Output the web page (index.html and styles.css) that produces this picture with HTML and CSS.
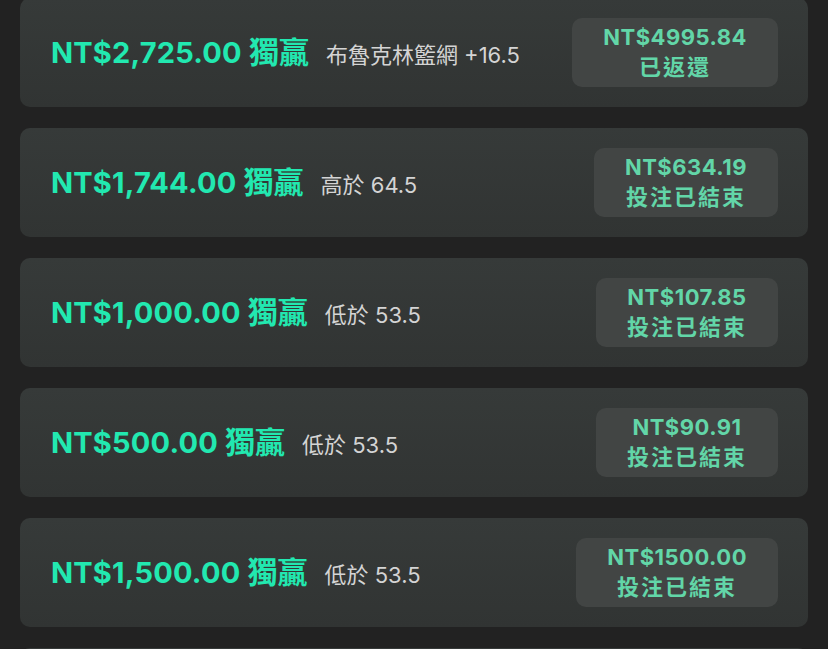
FILE: index.html
```html
<!DOCTYPE html>
<html>
<head>
  <title>投注紀錄</title>
  <link rel="stylesheet" href="styles.css">
</head>
<body>
  <div class="bet-list">
    <div class="bet-card">
      <div class="bet-info">
        <span class="bet-amount">NT$2,725.00 <span class="bet-type">獨贏</span></span>
        <span class="bet-pick">布魯克林籃網 +16.5</span>
      </div>
      <div class="bet-status">
        <span class="status-amount">NT$4995.84</span>
        <span class="status-text">已返還</span>
      </div>
    </div>
    <div class="bet-card">
      <div class="bet-info">
        <span class="bet-amount">NT$1,744.00 <span class="bet-type">獨贏</span></span>
        <span class="bet-pick">高於 64.5</span>
      </div>
      <div class="bet-status">
        <span class="status-amount">NT$634.19</span>
        <span class="status-text">投注已結束</span>
      </div>
    </div>
    <div class="bet-card">
      <div class="bet-info">
        <span class="bet-amount">NT$1,000.00 <span class="bet-type">獨贏</span></span>
        <span class="bet-pick">低於 53.5</span>
      </div>
      <div class="bet-status">
        <span class="status-amount">NT$107.85</span>
        <span class="status-text">投注已結束</span>
      </div>
    </div>
    <div class="bet-card">
      <div class="bet-info">
        <span class="bet-amount">NT$500.00 <span class="bet-type">獨贏</span></span>
        <span class="bet-pick">低於 53.5</span>
      </div>
      <div class="bet-status">
        <span class="status-amount">NT$90.91</span>
        <span class="status-text">投注已結束</span>
      </div>
    </div>
    <div class="bet-card">
      <div class="bet-info">
        <span class="bet-amount">NT$1,500.00 <span class="bet-type">獨贏</span></span>
        <span class="bet-pick">低於 53.5</span>
      </div>
      <div class="bet-status">
        <span class="status-amount">NT$1500.00</span>
        <span class="status-text">投注已結束</span>
      </div>
    </div>
    <div class="bet-card"></div>
  </div>
</body>
</html>
```

FILE: styles.css
```css
body {
  margin: 0;
  background-color: #222222;
  font-family: Inter, "Noto Sans CJK TC", sans-serif;
  overflow: hidden;
}

.bet-list {
  display: flex;
  flex-direction: column;
  gap: 21px;
  margin-top: -2px;
  padding: 0 20px;
}

.bet-card {
  display: flex;
  align-items: center;
  justify-content: space-between;
  height: 109px;
  flex-shrink: 0;
  padding: 0 30px 0 31px;
  border-radius: 10px;
  background: linear-gradient(180deg, #363a39, #313433);
}

.bet-info {
  display: flex;
  align-items: baseline;
  padding-bottom: 6px;
}

.bet-amount {
  font-size: 29px;
  font-weight: 700;
  letter-spacing: 0.2px;
  color: #22e8b0;
}

.bet-type {
  font-size: 30px;
  letter-spacing: 0;
}

.bet-pick {
  margin-left: 17px;
  font-size: 22px;
  color: #d4d4d4;
}

.bet-status {
  display: flex;
  flex-direction: column;
  align-items: center;
  justify-content: center;
  height: 69px;
  padding: 0 31px;
  border-radius: 10px;
  background-color: #424544;
  color: #62d6a8;
  font-weight: 700;
}

.status-amount {
  font-size: 22px;
  line-height: 29px;
  letter-spacing: 0.5px;
}

.status-text {
  font-size: 22px;
  line-height: 31px;
  letter-spacing: 2px;
}
```
